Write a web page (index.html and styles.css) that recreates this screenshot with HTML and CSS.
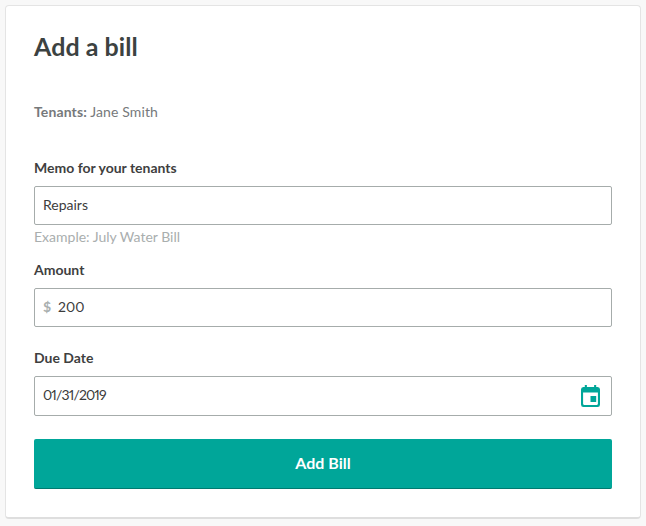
FILE: index.html
```html
<!DOCTYPE html>
<html lang="en">
<head>
<meta charset="utf-8">
<title>Add a bill</title>
<link rel="stylesheet" href="styles.css">
</head>
<body>
<main class="card">
  <h1 class="title">Add a bill</h1>
  <p class="tenants"><strong>Tenants:</strong> Jane Smith</p>
  <form class="form">
    <div class="field field-memo">
      <label class="label">Memo for your tenants</label>
      <div class="input"><span class="value">Repairs</span></div>
      <div class="hint">Example: July Water Bill</div>
    </div>
    <div class="field field-amount">
      <label class="label">Amount</label>
      <div class="input"><span class="prefix value">$</span><span class="value">200</span></div>
    </div>
    <div class="field field-date">
      <label class="label">Due Date</label>
      <div class="input input-date"><span class="value date">01/31/2019</span>
        <svg class="cal" viewBox="0 0 20 22" width="19" height="22" preserveAspectRatio="none" aria-hidden="true">
          <path fill="#00a699" d="M4 0h2.200v2h7.600V0H16v2h1.500A2.500 2.500 0 0 1 20 4.500v15a2.500 2.500 0 0 1-2.500 2.500h-15A2.500 2.500 0 0 1 0 19.500v-15A2.500 2.500 0 0 1 2.500 2H4zM2.200 7.500v11.300c0 .7.500 1.100 1.100 1.100h13.400c.6 0 1.100-.4 1.100-1.100V7.500z"/>
          <rect fill="#00a699" x="10" y="11" width="6" height="6"/>
        </svg>
      </div>
    </div>
    <button class="submit" type="button">Add Bill</button>
  </form>
</main>
</body>
</html>
```
FILE: styles.css
```css
* { box-sizing: border-box; }
html, body { margin: 0; height: 100%; }
body {
  background: #f8f8f8;
  padding: 5px;
  font-family: "Lato", "Open Sans", sans-serif;
  color: #3c3f40;
  font-variant-numeric: proportional-nums;
}
.card {
  width: 636px;
  height: 514px;
  background: #fff;
  border: 1px solid #e4e4e4;
  border-bottom: 2px solid #dedede;
  border-radius: 4px;
  padding: 26px 28px 0;
}
.title {
  margin: 0;
  font-size: 25px;
  line-height: 28px;
  font-weight: 700;
  letter-spacing: 0.05px;
  color: #3c4241;
}
.tenants {
  margin: 43px 0 0;
  font-size: 14px;
  line-height: 18px;
  letter-spacing: 0.12px;
  color: #76797b;
}
.tenants strong { font-weight: 700; }
.form { margin-top: 38px; }
.field { display: block; }
.label {
  display: block;
  font-size: 14px;
  line-height: 18px;
  font-weight: 700;
  color: #3f3f3f;
}
.input {
  display: flex;
  align-items: center;
  height: 39px;
  margin-top: 9px;
  padding: 0 8px;
  border: 1px solid #a6acab;
  border-radius: 2px;
  font-size: 14px;
  color: #3c3c3c;
}
.value { margin-bottom: 2px; }
.hint {
  margin-top: 3px;
  font-size: 14px;
  line-height: 18px;
  color: #a9aeae;
}
.field-amount { margin-top: 15px; }
.field-date { margin-top: 22px; }
.prefix { color: #aab0af; font-weight: 700; width: 15px; }
.input-date { height: 40px; justify-content: space-between; padding-right: 11px; }
.date { letter-spacing: -0.85px; margin-bottom: 3px; }
.cal { display: block; margin-bottom: 1px; }
.submit {
  display: block;
  width: 100%;
  height: 50px;
  margin-top: 23px;
  padding: 0 0 2px;
  background: #00a699;
  border: 0;
  border-bottom: 1px solid #007a70;
  border-radius: 2px;
  color: #fff;
  font-family: inherit;
  font-size: 16px;
  font-weight: 700;
}
```
